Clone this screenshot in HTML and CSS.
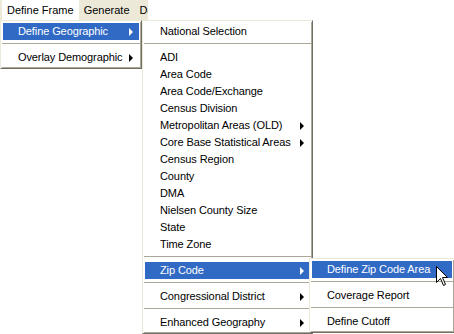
FILE: index.html
```html
<!DOCTYPE html>
<html>
<head>
<meta charset="utf-8">
<link rel="stylesheet" href="styles.css">
</head>
<body>
<div class="menubar">
  <span class="mb-item active">Define Frame</span>
  <span class="mb-item">Generate</span>
  <span class="mb-item">Data</span>
</div>

<div class="menu menu1">
  <div class="item hl"><span>Define Geographic</span><i class="arrow"></i></div>
  <div class="sep"></div>
  <div class="item"><span>Overlay Demographic</span><i class="arrow"></i></div>
</div>

<div class="menu menu2">
  <div class="item"><span>National Selection</span></div>
  <div class="sep"></div>
  <div class="item"><span>ADI</span></div>
  <div class="item"><span>Area Code</span></div>
  <div class="item"><span>Area Code/Exchange</span></div>
  <div class="item"><span>Census Division</span></div>
  <div class="item"><span>Metropolitan Areas (OLD)</span><i class="arrow"></i></div>
  <div class="item"><span>Core Base Statistical Areas</span><i class="arrow"></i></div>
  <div class="item"><span>Census Region</span></div>
  <div class="item"><span>County</span></div>
  <div class="item"><span>DMA</span></div>
  <div class="item"><span>Nielsen County Size</span></div>
  <div class="item"><span>State</span></div>
  <div class="item"><span>Time Zone</span></div>
  <div class="sep"></div>
  <div class="item hl"><span>Zip Code</span><i class="arrow"></i></div>
  <div class="sep"></div>
  <div class="item"><span>Congressional District</span><i class="arrow"></i></div>
  <div class="sep"></div>
  <div class="item"><span>Enhanced Geography</span><i class="arrow"></i></div>
</div>

<div class="menu menu3">
  <div class="item hl"><span>Define Zip Code Area</span></div>
  <div class="sep"></div>
  <div class="item"><span>Coverage Report</span></div>
  <div class="sep"></div>
  <div class="item"><span>Define Cutoff</span></div>
</div>

<svg class="cursor" width="13" height="21" viewBox="0 0 13 21">
  <path d="M0.5 0.5 L0.5 16.5 L4.5 12.5 L7.5 19.5 L9.5 18.5 L6.5 11.5 L11.5 11.5 Z" fill="#fff" stroke="#000" stroke-width="1" stroke-linejoin="miter"/>
</svg>
</body>
</html>
```
FILE: styles.css
```css
html, body {
  margin: 0;
  padding: 0;
}
body {
  width: 454px;
  height: 334px;
  overflow: hidden;
  position: relative;
  background: #fff;
  font-family: "Liberation Sans", Arial, sans-serif;
  font-size: 11px;
  color: #000;
}
.menubar {
  display: flex;
  width: 148px;
  height: 20px;
  background: #ece9d8;
  box-sizing: border-box;
  padding-left: 2px;
  align-items: stretch;
  white-space: nowrap;
  overflow: hidden;
}
.mb-item {
  display: flex;
  align-items: center;
  padding: 0 5px;
  line-height: 1;
  white-space: nowrap;
  flex-shrink: 0;
}
.mb-item.active {
  background: #fff;
}
.menu {
  position: absolute;
  background: #fff;
  box-sizing: border-box;
  border-top: 1px solid #ece9d8;
  border-left: 1px solid #ece9d8;
  border-right: 1px solid #716f64;
  border-bottom: 1px solid #716f64;
  box-shadow: inset 1px 1px 0 #fff, inset -1px -1px 0 #aca899;
  padding: 2px;
}
.menu1 {
  left: 0;
  top: 20px;
  width: 142px;
}
.menu2 {
  left: 142px;
  top: 20px;
  width: 171px;
}
.menu3 {
  left: 309px;
  top: 258px;
  width: 146px;
}
.item {
  height: 17px;
  display: flex;
  align-items: center;
  justify-content: space-between;
  padding: 0 6px 0 15px;
  line-height: 17px;
  white-space: nowrap;
  letter-spacing: -0.1px;
}
.item.hl {
  background: #316ac5;
  color: #fff;
}
.arrow {
  width: 0;
  height: 0;
  border-top: 4px solid transparent;
  border-bottom: 4px solid transparent;
  border-left: 4px solid #000;
}
.item.hl .arrow {
  border-left-color: #fff;
}
.sep {
  height: 9px;
  position: relative;
}
.sep::before {
  content: "";
  position: absolute;
  left: -1px;
  right: -1px;
  top: 3px;
  border-top: 1px solid #aca899;
  border-bottom: 1px solid #fff;
}
.cursor {
  position: absolute;
  left: 436px;
  top: 266px;
}
```
